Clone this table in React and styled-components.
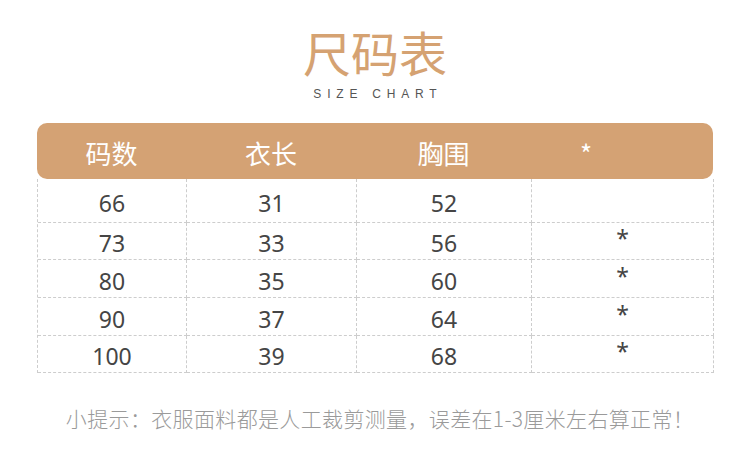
import styled, { createGlobalStyle } from 'styled-components';

const GlobalStyle = createGlobalStyle`
  body {
    margin: 0;
    background: #ffffff;
    font-family: "Noto Sans", "Noto Sans CJK SC", sans-serif;
  }
`;

const COLUMNS = [149, 170, 175, 182];

const HEADERS = [
  { label: '码数' },
  { label: '衣长' },
  { label: '胸围' },
  { label: '*', shift: -36 },
];

const ROWS = [
  { height: 44, cells: ['66', '31', '52', ''] },
  { height: 37, cells: ['73', '33', '56', '*'] },
  { height: 38, cells: ['80', '35', '60', '*'] },
  { height: 38, cells: ['90', '37', '64', '*'] },
  { height: 37, cells: ['100', '39', '68', '*'] },
];

const App = () => {
  return (
    <Page>
      <GlobalStyle />
      <TitleBlock>
        <Title>尺码表</Title>
        <Subtitle>SIZE CHART</Subtitle>
      </TitleBlock>

      <Table>
        <HeaderBar>
          {HEADERS.map((h) => (
            <HeaderCell key={h.label} $shift={h.shift || 0}>
              {h.label}
            </HeaderCell>
          ))}
        </HeaderBar>

        <Body>
          {ROWS.map((row) =>
            row.cells.map((value, i) => (
              <Cell
                key={`${row.cells[0]}-${i}`}
                $height={row.height}
                $star={value === '*'}>
                {value}
              </Cell>
            ))
          )}
        </Body>
      </Table>

      <Tip>小提示：衣服面料都是人工裁剪测量，误差在1-3厘米左右算正常！</Tip>
    </Page>
  );
};

const Page = styled.div`
  width: 750px;
  height: 470px;
  display: flex;
  flex-direction: column;
  align-items: center;
  padding-top: 23px;
  box-sizing: border-box;
`;

const TitleBlock = styled.div`
  display: flex;
  flex-direction: column;
  align-items: center;
`;

const Title = styled.div`
  font-family: "Noto Sans CJK SC", sans-serif;
  font-size: 48px;
  line-height: 56px;
  color: #d5a272;
`;

const Subtitle = styled.div`
  font-family: "Liberation Sans", "Noto Sans", sans-serif;
  font-size: 12px;
  line-height: 14px;
  letter-spacing: 5.8px;
  margin-top: 8px;
  margin-right: -5.8px;
  color: #555555;
`;

const Table = styled.div`
  width: 676px;
  margin-top: 22px;
  display: flex;
  flex-direction: column;
`;

const HeaderBar = styled.div`
  height: 56px;
  border-radius: 10px;
  background-color: #d4a274;
  display: grid;
  grid-template-columns: ${COLUMNS.map((c) => `${c}px`).join(' ')};
  align-items: center;
`;

const HeaderCell = styled.div`
  font-family: "Noto Sans CJK SC", sans-serif;
  font-size: 26px;
  line-height: 30px;
  color: #ffffff;
  text-align: center;
  padding-top: 3px;
  transform: translateX(${(p) => p.$shift}px);
`;

const Body = styled.div`
  display: grid;
  grid-template-columns: ${COLUMNS.map((c) => `${c}px`).join(' ')};
  border-left: 1px dashed #cdcdcd;
  box-sizing: border-box;
`;

const Cell = styled.div`
  height: ${(p) => p.$height}px;
  box-sizing: border-box;
  border-right: 1px dashed #cdcdcd;
  border-bottom: 1px dashed #cdcdcd;
  display: flex;
  align-items: center;
  justify-content: center;
  font-size: 23px;
  color: #454545;
  padding-top: ${(p) => (p.$star ? 0 : 4)}px;
  padding-bottom: ${(p) => (p.$star ? 6 : 0)}px;
`;

const Tip = styled.div`
  margin-top: 32px;
  margin-left: 10px;
  font-family: "Noto Sans CJK SC", sans-serif;
  font-size: 21px;
  font-weight: 300;
  letter-spacing: 0.35px;
  line-height: 26px;
  color: #9a9a9a;
`;

export default App;
